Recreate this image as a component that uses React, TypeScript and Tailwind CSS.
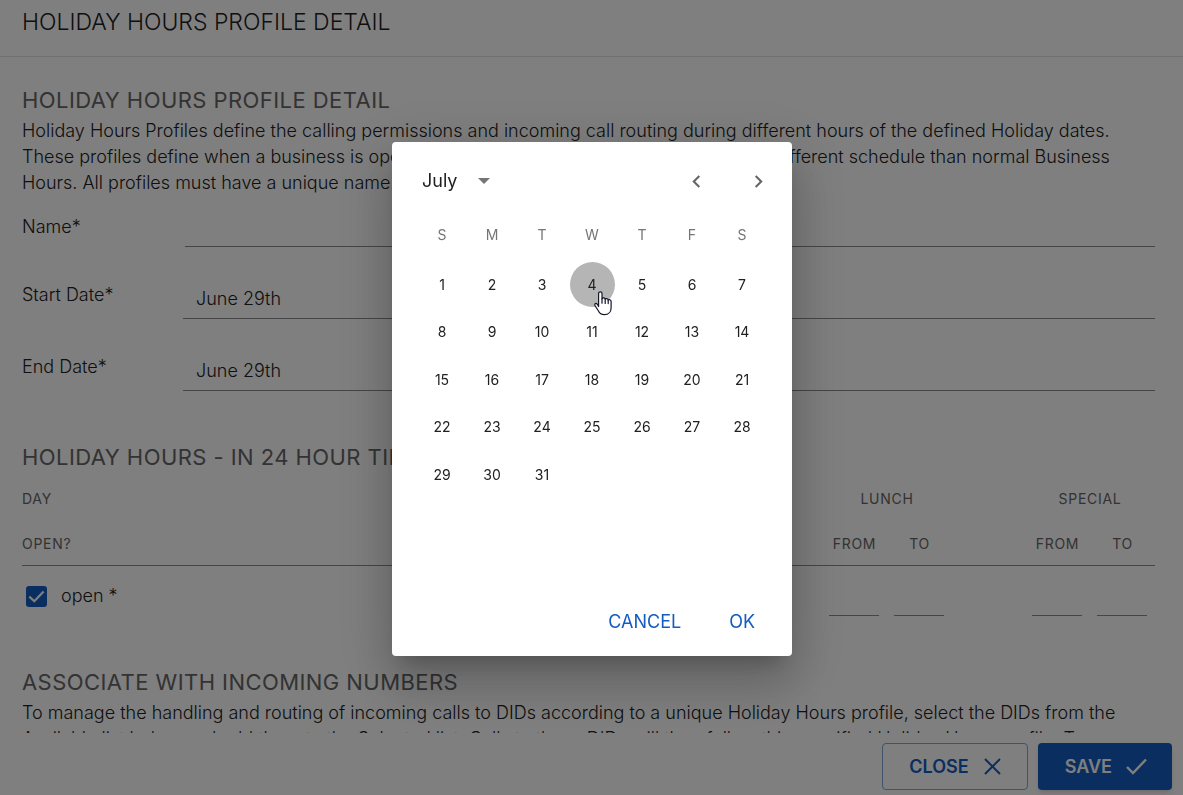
import { useState } from 'react';
import type { ReactNode } from 'react';

const weekdays = ['S', 'M', 'T', 'W', 'T', 'F', 'S'];
const days = Array.from({ length: 31 }, (_, i) => i + 1);

function SectionTitle({ children }: { children: ReactNode }) {
  return <h2 className="pb-px text-[22px] leading-[34px] font-normal tracking-[0.02em] text-[#666666]">{children}</h2>;
}

function DateField({ id, label }: { id: string; label: string }) {
  return (
    <div className="flex h-[72px] items-end">
      <label htmlFor={id} className="w-[161px] shrink-0 pb-[11px]">{label}</label>
      <input
        id={id}
        readOnly
        defaultValue="June 29th"
        className="h-10 min-w-0 flex-1 border-b border-[#8c8c8c] bg-transparent px-[13px] outline-none"
      />
    </div>
  );
}

function TimeCell({ label }: { label: string }) {
  return (
    <td className="pr-2 pl-[7px] align-bottom">
      <input aria-label={label} className="block h-9 w-full border-b border-[#8c8c8c] bg-transparent outline-none" />
    </td>
  );
}

function HoursTable() {
  return (
    <table className="w-full table-fixed border-collapse">
      <colgroup>
        <col />
        <col className="w-[65px]" />
        <col className="w-[65px]" />
        <col className="w-[73px]" />
        <col className="w-[65px]" />
        <col className="w-[65px]" />
      </colgroup>
      <thead className="text-[14px] tracking-wider text-[#666666]">
        <tr className="h-[46px]">
          <th className="pt-[2px] text-left font-normal">DAY</th>
          <th colSpan={2} className="pt-[2px] font-normal">LUNCH</th>
          <th />
          <th colSpan={2} className="pt-[2px] font-normal">SPECIAL</th>
        </tr>
        <tr className="h-[44px] border-b border-[#8c8c8c]">
          <th className="pt-[2px] text-left font-normal">OPEN?</th>
          <th className="pt-[2px] font-normal">FROM</th>
          <th className="pt-[2px] font-normal">TO</th>
          <th />
          <th className="pt-[2px] font-normal">FROM</th>
          <th className="pt-[2px] font-normal">TO</th>
        </tr>
      </thead>
      <tbody>
        <tr className="h-[51px]">
          <td className="pt-[11px]">
            <label className="flex items-center gap-[14px] pl-1">
              <span className="relative flex size-[21px]">
                <input type="checkbox" defaultChecked className="size-[21px] appearance-none rounded-[3px] bg-[#155cbf]" />
                <svg viewBox="0 0 21 21" className="pointer-events-none absolute inset-0" fill="none" stroke="#fff" strokeWidth="2.2">
                  <path d="M3.3 10.6 8.3 15.2 17.6 5.6" />
                </svg>
              </span>
              open *
            </label>
          </td>
          <TimeCell label="Lunch from" />
          <TimeCell label="Lunch to" />
          <td />
          <TimeCell label="Special from" />
          <TimeCell label="Special to" />
        </tr>
      </tbody>
    </table>
  );
}

function HandPointer() {
  return (
    <svg
      viewBox="0 0 18 25"
      className="pointer-events-none absolute top-[29px] left-6 h-[25px] w-[18px]"
      fill="#fff"
      stroke="#151528"
      strokeWidth="1.2"
      strokeLinejoin="round"
      strokeLinecap="round"
    >
      <path d="M4.6 15.5V2.6C4.6.2 8 .2 8 2.6V8c.3-1.6 3-1.5 3.2.4.5-1.3 2.9-1 3 .8.6-1 2.9-.7 2.9 1.2v6.3c0 4-2.4 7-6.7 7-3.3 0-5-1.5-6.2-4.2L1 14.6c-1-2 1.2-2.8 2.3-1.3Z" />
      <path d="M8 7.8v4.4M11.2 8.6v3.8M14.2 9.4v3.2" fill="none" />
    </svg>
  );
}

function DatePickerDialog() {
  const [selected, setSelected] = useState(4);
  return (
    <div
      role="dialog"
      aria-modal="true"
      aria-label="Choose date"
      className="flex w-[400px] flex-col rounded bg-white px-[25px] pb-[14px] shadow-[0_14px_19px_-9px_rgba(0,0,0,0.2),0_30px_48px_4px_rgba(0,0,0,0.14),0_11px_58px_10px_rgba(0,0,0,0.12)]"
    >
      <div className="flex h-[78px] items-center pl-[5px]">
        <button className="flex items-center gap-[21px] font-normal text-[#212121]">
          July
          <svg width="12" height="6" viewBox="0 0 12 6" fill="#757575"><path d="M0 0h12L6 6z" /></svg>
        </button>
        <div className="-mr-1 ml-auto flex gap-[37px] text-[#666666]">
          <button aria-label="Previous month">
            <svg width="25" height="25" viewBox="0 0 24 24" fill="currentColor"><path d="M15.41 7.41 14 6l-6 6 6 6 1.41-1.41L10.83 12z" /></svg>
          </button>
          <button aria-label="Next month">
            <svg width="25" height="25" viewBox="0 0 24 24" fill="currentColor"><path d="M10 6 8.59 7.41 13.17 12l-4.58 4.59L10 18l6-6z" /></svg>
          </button>
        </div>
      </div>
      <div className="grid h-[41px] grid-cols-7 pt-[2px] text-center text-[14px] font-normal text-[#757575]">
        {weekdays.map((d, i) => <span key={i}>{d}</span>)}
      </div>
      <div className="grid h-[285px] grid-cols-7 grid-rows-6 place-items-center">
        {days.map((d) => (
          <div key={d} className="relative">
            <button
              onClick={() => setSelected(d)}
              className={
                d === selected
                  ? 'size-[45px] rounded-full bg-[#b5b5b5] text-[14px] font-normal text-[#212121]'
                  : 'size-[45px] rounded-full text-[14px] font-normal text-[#212121]'
              }
            >
              {d}
            </button>
            {d === selected && <HandPointer />}
          </div>
        ))}
      </div>
      <div className="flex h-24 items-end justify-end gap-8 pr-1 font-normal text-[#155cbf]">
        <button className="h-10 px-2">CANCEL</button>
        <button className="h-10 px-2">OK</button>
      </div>
    </div>
  );
}

export default function App() {
  return (
    <div className="relative flex h-screen flex-col overflow-hidden bg-white font-['Inter',sans-serif] text-[18px] leading-[26px] font-light text-[#212121]">
      <header className="h-[57px] shrink-0 border-b border-[#e0e0e0] px-[22px] pt-[5px]">
        <h1 className="text-[23px] leading-[34px]">HOLIDAY HOURS PROFILE DETAIL</h1>
      </header>

      <main className="min-h-0 flex-1 overflow-hidden pt-[26px] pr-7 pl-[22px]">
        <section>
          <SectionTitle>HOLIDAY HOURS PROFILE DETAIL</SectionTitle>
          <p>
            Holiday Hours Profiles define the calling permissions and incoming call routing during different hours of the
            defined Holiday dates. These profiles define when a business is open or closed for special Holidays that follow
            a different schedule than normal Business Hours. All profiles must have a unique name.
          </p>
          <div className="flex h-[51px] items-end">
            <label htmlFor="name" className="w-[163px] shrink-0 pb-[7px]">Name*</label>
            <input id="name" className="h-10 min-w-0 flex-1 border-b border-[#8c8c8c] bg-transparent outline-none" />
          </div>
          <DateField id="start" label="Start Date*" />
          <DateField id="end" label="End Date*" />
        </section>

        <section className="pt-[49px]">
          <SectionTitle>HOLIDAY HOURS - IN 24 HOUR TIME</SectionTitle>
          <HoursTable />
        </section>

        <section className="pt-[49px]">
          <SectionTitle>ASSOCIATE WITH INCOMING NUMBERS</SectionTitle>
          <p>
            To manage the handling and routing of incoming calls to DIDs according to a unique Holiday Hours profile, select
            the DIDs from the Available list below and add them to the Selected list. Calls to these DIDs will then follow
            this specified Holiday Hours profile. To
          </p>
        </section>
      </main>

      <footer className="flex h-[62px] shrink-0 justify-end gap-[10px] pt-[10px] pr-[11px] pb-[5px] font-semibold">
        <button className="flex items-center gap-[15px] rounded border border-[#7ea6dc] px-[26px] text-[#155cbf]">
          CLOSE
          <svg width="17" height="17" viewBox="0 0 17 17" fill="none" stroke="currentColor" strokeWidth="2"><path d="m1 1 15 15M16 1 1 16" /></svg>
        </button>
        <button className="flex items-center gap-[14px] rounded bg-[#155cbf] pr-[25px] pl-[27px] text-white shadow-md">
          SAVE
          <svg width="21" height="17" viewBox="0 0 21 17" fill="none" stroke="currentColor" strokeWidth="2.4"><path d="m1 9 6 6L20 1.5" /></svg>
        </button>
      </footer>

      <div className="fixed inset-0 flex items-center justify-center bg-black/50 pt-[3px] pl-px">
        <DatePickerDialog />
      </div>
    </div>
  );
}
